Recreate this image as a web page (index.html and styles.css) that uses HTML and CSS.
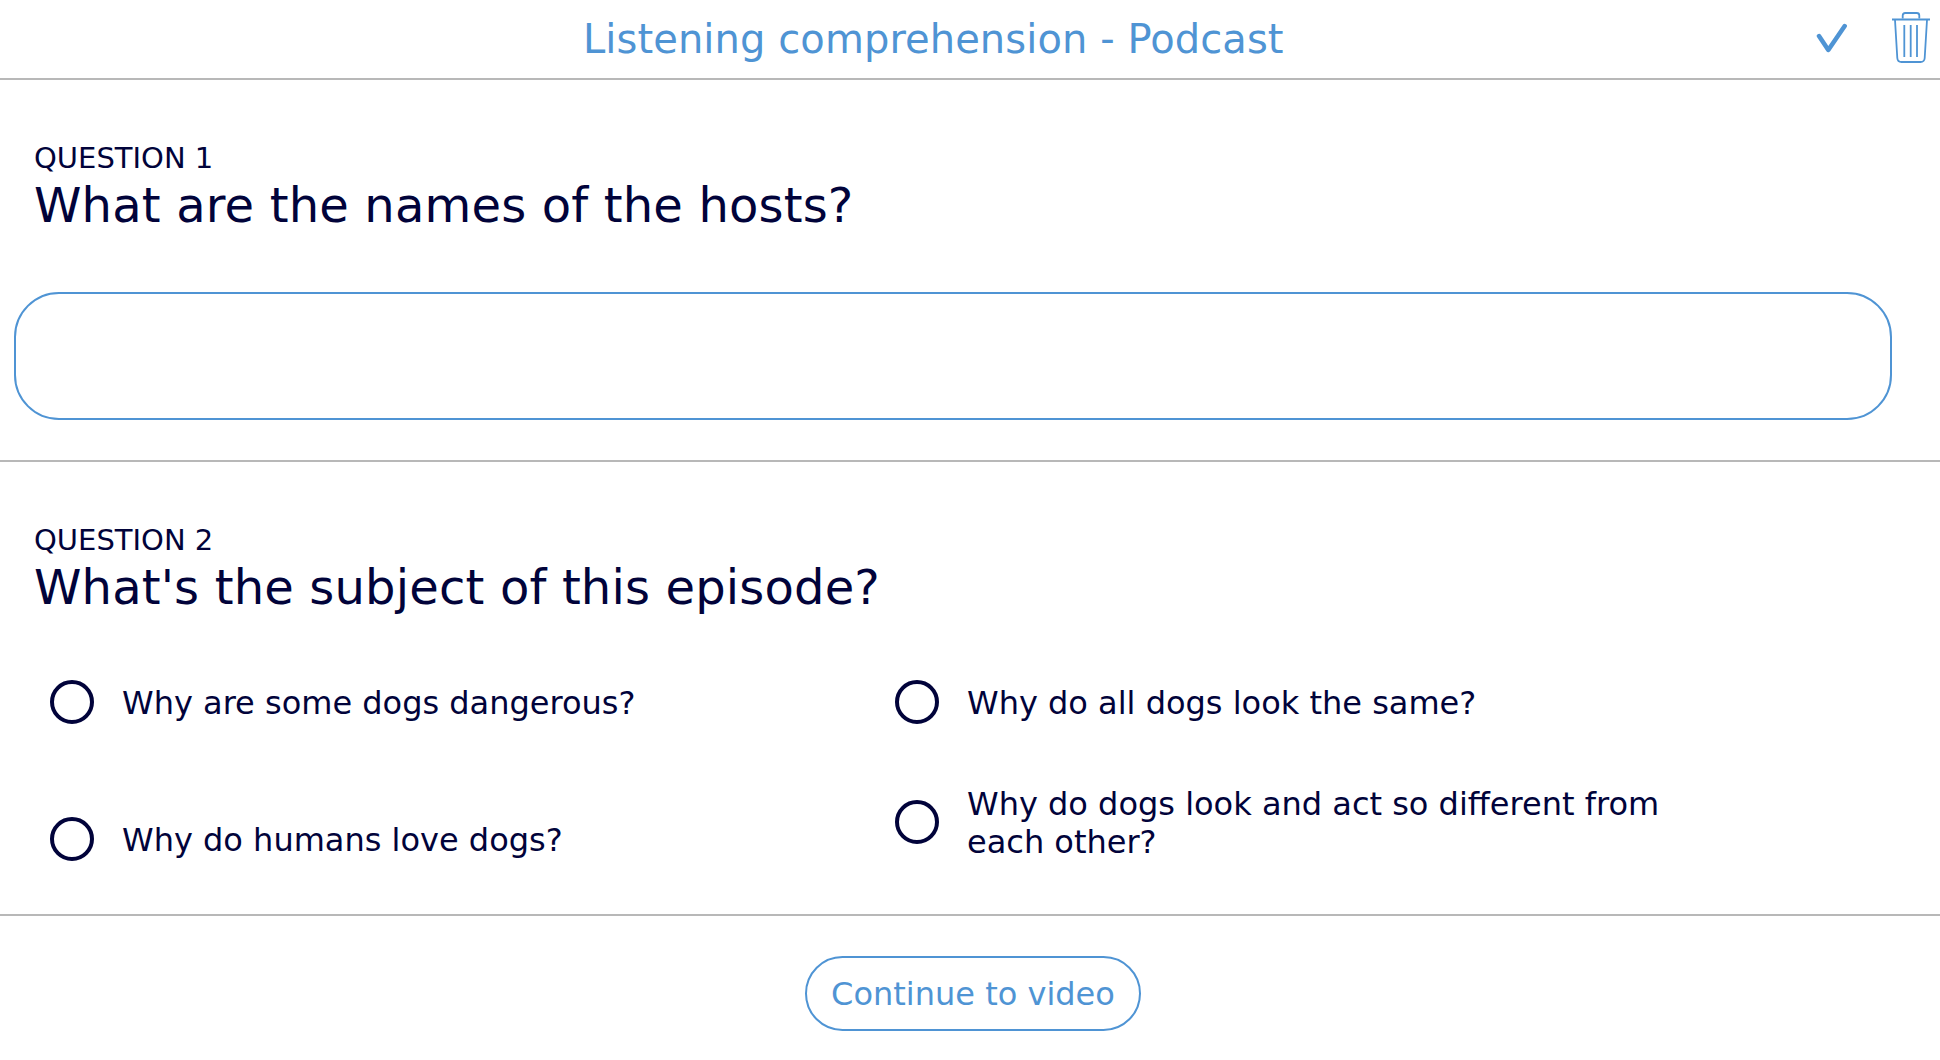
FILE: index.html
```html
<!DOCTYPE html>
<html lang="en">
<head>
    <meta charset="UTF-8">
    <title>Listening comprehension - Podcast</title>
    <link rel="stylesheet" href="styles.css">
</head>
<body>
    <div class="top-bar">
        <div class="top-title">Listening comprehension - Podcast</div>
        <div class="top-icons">
            <svg class="icon-check" width="36" height="32" viewBox="0 0 36 32" fill="none" stroke="#4f94d4" stroke-width="4.500" stroke-linecap="round" stroke-linejoin="round">
                <path d="M3 14 L12.300 28 L28.700 4"/>
            </svg>
            <svg class="icon-trash" width="38" height="52" viewBox="0 0 38 52" fill="none" stroke="#4f94d4" stroke-width="1.800" stroke-linejoin="round">
                <path d="M0 7.500 H38" stroke-width="2"/>
                <path d="M10.700 6.500 V3.500 Q10.700 1 13.200 1 H24.800 Q27.300 1 27.300 3.500 V6.500"/>
                <path d="M3 8 L5.300 46 Q5.600 50 9.500 50 H28.500 Q32.400 50 32.700 46 L35 8"/>
                <path d="M12.300 13 V45 M18.700 13 V45 M25 13 V45"/>
            </svg>
        </div>
    </div>

    <div class="question question-text">
        <div class="question-label">QUESTION 1</div>
        <div class="question-title">What are the names of the hosts?</div>
        <input class="answer-input" type="text">
    </div>

    <div class="question question-choice">
        <div class="question-label">QUESTION 2</div>
        <div class="question-title">What's the subject of this episode?</div>
        <div class="options">
            <div class="options-col col-left">
                <label class="option"><span class="radio"></span><span class="option-text">Why are some dogs dangerous?</span></label>
                <label class="option"><span class="radio"></span><span class="option-text">Why do humans love dogs?</span></label>
            </div>
            <div class="options-col col-right">
                <label class="option"><span class="radio"></span><span class="option-text">Why do all dogs look the same?</span></label>
                <label class="option"><span class="radio"></span><span class="option-text">Why do dogs look and act so different from each other?</span></label>
            </div>
        </div>
    </div>

    <div class="bottom-bar">
        <button class="continue-btn">Continue to video</button>
    </div>
</body>
</html>
```

FILE: styles.css
```css
* {
    box-sizing: border-box;
}
html, body {
    height: 100%;
}
body {
    margin: 0;
    background-color: #fff;
    color: #01033a;
    font-family: "DejaVu Sans", Verdana, sans-serif;
    overflow: hidden;
}
.top-bar {
    height: 80px;
    border-bottom: 2px solid #b8b8b8;
    display: flex;
    align-items: center;
    justify-content: space-between;
    padding-left: 583px;
}
.top-title {
    font-size: 40px;
    letter-spacing: 0.08px;
    color: #4f94d4;
    white-space: nowrap;
}
.top-icons {
    display: flex;
    align-items: center;
    gap: 40px;
    padding-right: 10px;
    padding-bottom: 3px;
}
.question {
    border-bottom: 2px solid #b8b8b8;
}
.question-text {
    height: 382px;
    padding-top: 62px;
}
.question-choice {
    height: 454px;
    padding-top: 62px;
}
.question-label {
    font-size: 29px;
    line-height: 32px;
    padding-left: 34px;
}
.question-title {
    font-size: 48px;
    letter-spacing: 0.16px;
    line-height: 62px;
    padding-left: 34px;
}
.answer-input {
    display: block;
    margin: 56px 0 0 14px;
    width: 1878px;
    height: 128px;
    border: 2px solid #4f94d4;
    border-radius: 45px;
    background: #fff;
    outline: none;
}
.options {
    display: flex;
    margin-top: 62px;
    padding-left: 50px;
}
.options-col {
    display: flex;
    flex-direction: column;
}
.col-left {
    width: 845px;
    gap: 93px;
}
.col-right {
    width: 790px;
    gap: 59px;
}
.option {
    display: flex;
    align-items: center;
    gap: 28px;
    font-size: 32px;
    line-height: 38px;
}
.option-text {
    padding-top: 2px;
}
.radio {
    flex: none;
    width: 44px;
    height: 44px;
    border: 4px solid #01033a;
    border-radius: 50%;
}
.bottom-bar {
    display: flex;
    justify-content: center;
    padding: 40px 0 0 6px;
}
.continue-btn {
    width: 336px;
    height: 75px;
    border: 2px solid #4f94d4;
    border-radius: 38px;
    background: #fff;
    color: #4f94d4;
    font-family: inherit;
    font-size: 32px;
}
```
